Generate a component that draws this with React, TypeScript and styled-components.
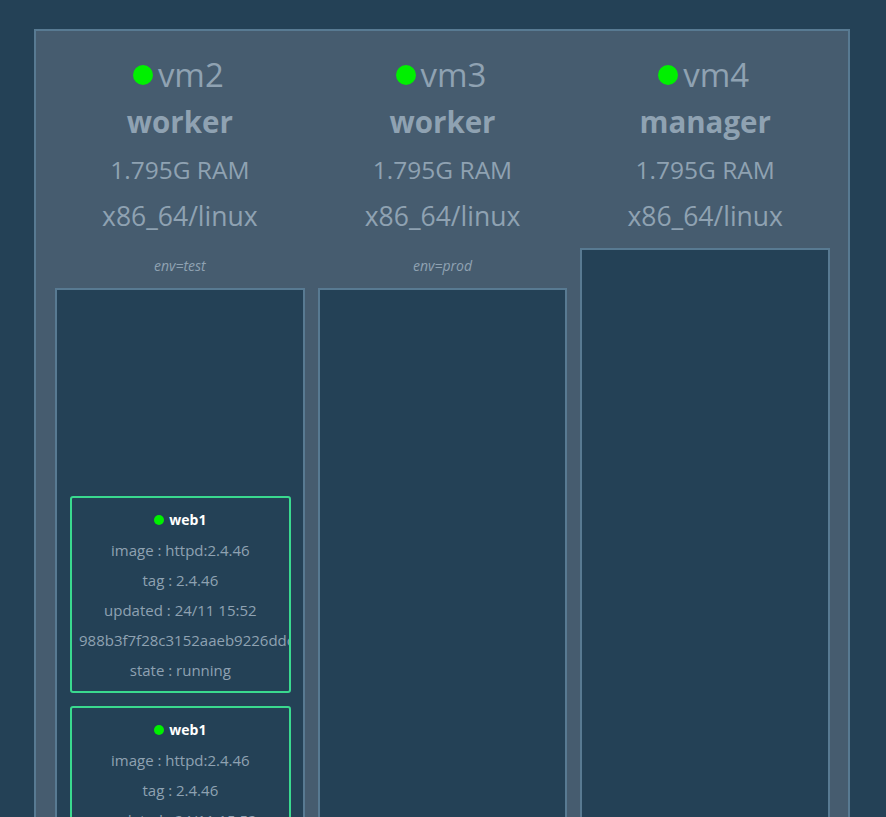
import { createGlobalStyle, styled } from "styled-components";

const GlobalStyle = createGlobalStyle`
    html, body {
        margin: 0;
        padding: 0;
        background-color: #244156;
        font-family: "Open Sans", "DejaVu Sans", sans-serif;
        overflow: hidden;
    }
`;

const Panel = styled.div`
    width: 816px;
    margin: 29px 0 0 34px;
    box-sizing: border-box;
    background-color: #465c6f;
    border: 2px solid #587a92;
    border-bottom: none;
    padding: 0 18px 0 19px;
    display: flex;
    gap: 13px;
    align-items: stretch;
`;

const Column = styled.div`
    flex: 1;
    display: flex;
    flex-direction: column;
    align-items: stretch;
    min-width: 0;
`;

const Header = styled.div`
    display: flex;
    flex-direction: column;
    align-items: center;
    color: #8fa2b2;
    padding-top: 24px;
    height: 217px;
    box-sizing: border-box;
`;

const Name = styled.div`
    display: flex;
    align-items: center;
    gap: 5px;
    font-size: 33px;
    line-height: 40px;
    margin-left: -3px;
`;

const Dot = styled.span<{ size: number }>`
    display: inline-block;
    width: ${(p) => p.size}px;
    height: ${(p) => p.size}px;
    border-radius: 50%;
    background-color: #00f000;
    flex-shrink: 0;
`;

const Role = styled.div`
    font-size: 29.5px;
    font-weight: 700;
    line-height: 48px;
    margin-top: 3px;
`;

const Spec = styled.div<{ size: number }>`
    font-size: ${(p) => p.size}px;
    line-height: 47px;
`;

const Label = styled.div`
    height: 40px;
    display: flex;
    align-items: center;
    justify-content: center;
    font-style: italic;
    font-size: 14px;
    color: #8fa2b2;
    padding-bottom: 6px;
    box-sizing: border-box;
`;

const Box = styled.div<{ empty?: boolean }>`
    background-color: #244156;
    border: 2px solid #587a92;
    border-bottom: none;
    min-height: 700px;
    padding: ${(p) => (p.empty ? "0" : "206px 12px 0 13px")};
    display: flex;
    flex-direction: column;
    gap: 13px;
`;

const Card = styled.div`
    border: 2px solid #3ad98f;
    border-radius: 3px;
    padding: 7px 7px 6px;
    display: flex;
    flex-direction: column;
    align-items: center;
    overflow: hidden;
`;

const CardTitle = styled.div`
    display: flex;
    align-items: center;
    gap: 5px;
    font-size: 14px;
    font-weight: 700;
    color: #ffffff;
    line-height: 30px;
`;

const CardLine = styled.div`
    width: 100%;
    font-size: 15px;
    line-height: 30px;
    color: #8fa2b2;
    text-align: center;
    white-space: nowrap;
`;

interface Service {
    name: string;
    image: string;
    tag: string;
    updated: string;
    id: string;
    state: string;
}

interface Node {
    name: string;
    role: string;
    ram: string;
    platform: string;
    label?: string;
    services: Service[];
}

const web1: Service = {
    name: "web1",
    image: "httpd:2.4.46",
    tag: "2.4.46",
    updated: "24/11 15:52",
    id: "988b3f7f28c3152aaeb9226ddc41c6a7",
    state: "running",
};

const nodes: Node[] = [
    { name: "vm2", role: "worker", ram: "1.795G RAM", platform: "x86_64/linux", label: "env=test", services: [web1, web1] },
    { name: "vm3", role: "worker", ram: "1.795G RAM", platform: "x86_64/linux", label: "env=prod", services: [] },
    { name: "vm4", role: "manager", ram: "1.795G RAM", platform: "x86_64/linux", services: [] },
];

const ServiceCard = ({ service }: { service: Service }) => (
    <Card>
        <CardTitle>
            <Dot size={10} />
            {service.name}
        </CardTitle>
        <CardLine>image : {service.image}</CardLine>
        <CardLine>tag : {service.tag}</CardLine>
        <CardLine>updated : {service.updated}</CardLine>
        <CardLine>{service.id}</CardLine>
        <CardLine>state : {service.state}</CardLine>
    </Card>
);

const App = () => (
    <>
        <GlobalStyle />
        <Panel>
            {nodes.map((node) => (
                <Column key={node.name}>
                    <Header>
                        <Name>
                            <Dot size={20} />
                            {node.name}
                        </Name>
                        <Role>{node.role}</Role>
                        <Spec size={24.5}>{node.ram}</Spec>
                        <Spec size={26.5}>{node.platform}</Spec>
                    </Header>
                    {node.label && <Label>{node.label}</Label>}
                    <Box empty={node.services.length === 0}>
                        {node.services.map((s, i) => (
                            <ServiceCard key={i} service={s} />
                        ))}
                    </Box>
                </Column>
            ))}
        </Panel>
    </>
);

export default App;
